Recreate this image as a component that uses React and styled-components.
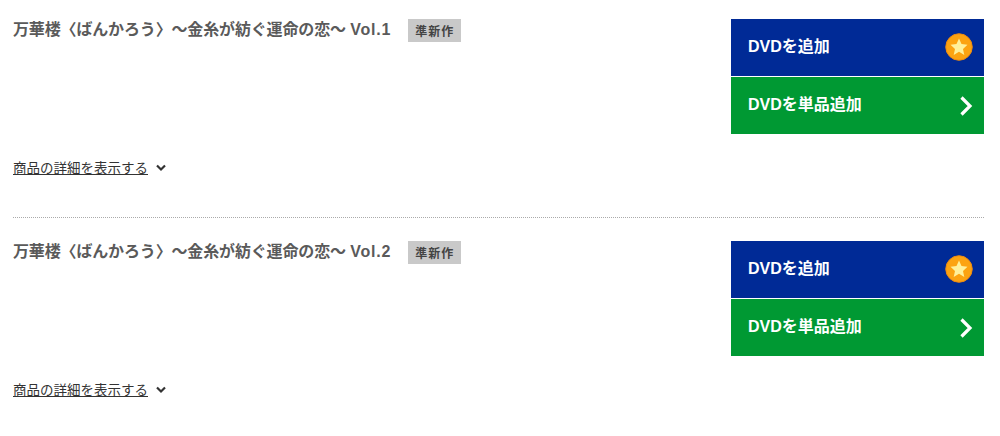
import React from "react";
import styled, { createGlobalStyle } from "styled-components";

const Global = createGlobalStyle`
  html, body { margin: 0; padding: 0; background: #fff; }
  body { font-family: "Liberation Sans", "Noto Sans CJK JP", sans-serif; }
`;

const Page = styled.div`
  width: 1000px;
  height: 436px;
  overflow: hidden;
  padding: 19px 16px 0 13px;
  box-sizing: border-box;
`;

const Item = styled.section`
  height: 198px;
`;

const Divider = styled.hr`
  margin: 0 0 23px;
  border: 0;
  border-top: 1px dotted #aaa;
  height: 0;
`;

const Top = styled.div`
  display: flex;
  justify-content: space-between;
  align-items: flex-start;
`;

const TitleRow = styled.div`
  display: flex;
  align-items: center;
  gap: 17px;
  height: 23px;
`;

const Title = styled.h2`
  margin: -1px 0 0;
  font-size: 16px;
  font-weight: 700;
  color: #5a5a5a;
  line-height: 22px;
  letter-spacing: -0.15px;
  white-space: nowrap;
`;

const Latin = styled.span`
  letter-spacing: 0.8px;
`;

const Badge = styled.span`
  display: flex;
  align-items: center;
  justify-content: center;
  width: 53px;
  height: 23px;
  background: #c9c9c9;
  color: #444;
  font-size: 12px;
  font-weight: 700;
  letter-spacing: 1px;
`;

const Actions = styled.div`
  width: 253px;
  display: flex;
  flex-direction: column;
  gap: 1px;
`;

const Action = styled.button`
  display: flex;
  align-items: center;
  justify-content: space-between;
  width: 100%;
  height: 57px;
  border: 0;
  padding: 0 11px 0 17px;
  background: ${(p) => p.$bg};
  color: #fff;
  font: 700 16px "Liberation Sans", "Noto Sans CJK JP", sans-serif;
`;

const ActionLabel = styled.span`
  margin-top: -5px;
`;

const More = styled.div`
  display: flex;
  align-items: center;
  gap: 8px;
  margin-top: 24px;
  height: 18px;
  font-size: 13.5px;
  color: #333;
`;

const MoreLink = styled.a`
  color: #333;
  text-decoration: underline;
`;

const StarIcon = styled.svg`
  flex: none;
  margin-top: -1px;
`;

const ArrowIcon = styled.svg`
  flex: none;
  margin-right: -1px;
`;

const ChevronIcon = styled.svg`
  flex: none;
  margin-top: 2px;
`;

const Star = () => (
  <StarIcon width="28" height="28" viewBox="0 0 28 28">
    <circle cx="14" cy="14" r="13.25" fill="#fca311" stroke="#ec8a12" strokeWidth="1" />
    <path
      d="M14 5.5l2.5 5.6 6 .7-4.5 4.1 1.3 6-5.3-3.1-5.3 3.1 1.3-6-4.5-4.1 6-.7z"
      fill="#fff09a"
    />
  </StarIcon>
);

const Arrow = () => (
  <ArrowIcon width="16" height="22" viewBox="0 0 16 22" fill="none">
    <path d="M3.5 2.5l8.5 8.5-8.5 8.5" stroke="#fff" strokeWidth="3.2" />
  </ArrowIcon>
);

const Chevron = () => (
  <ChevronIcon width="10" height="8" viewBox="0 0 10 8" fill="none">
    <path d="M1 1.5l4 4 4-4" stroke="#333" strokeWidth="2.2" />
  </ChevronIcon>
);

const Product = ({ vol }) => (
  <Item>
    <Top>
      <TitleRow>
        <Title>
          万華楼〈ばんかろう〉～金糸が紡ぐ運命の恋～ <Latin>Vol.{vol}</Latin>
        </Title>
        <Badge>準新作</Badge>
      </TitleRow>
      <Actions>
        <Action $bg="#002a96">
          <ActionLabel>DVDを追加</ActionLabel>
          <Star />
        </Action>
        <Action $bg="#009933">
          <ActionLabel>DVDを単品追加</ActionLabel>
          <Arrow />
        </Action>
      </Actions>
    </Top>
    <More>
      <MoreLink>商品の詳細を表示する</MoreLink>
      <Chevron />
    </More>
  </Item>
);

export default function App() {
  return (
    <Page>
      <Global />
      <Product vol={1} />
      <Divider />
      <Product vol={2} />
    </Page>
  );
}
